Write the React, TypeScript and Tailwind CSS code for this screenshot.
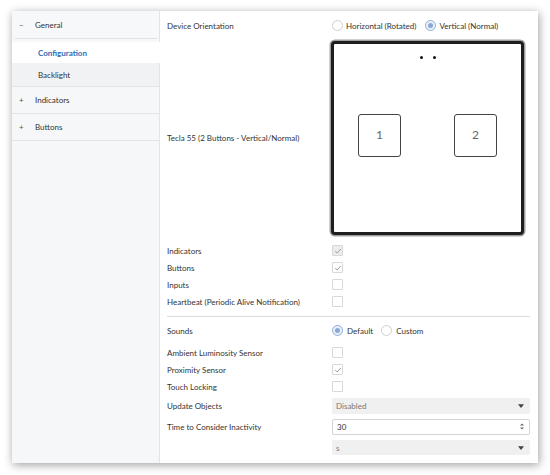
import React from 'react';

const Check = ({ className = '' }: { className?: string }) => (
  <svg viewBox="0 0 10 10" className={`w-[8px] h-[8px] ${className}`}>
    <path d="M1.5 5.2 L4 7.5 L8.5 2.5" fill="none" stroke="currentColor" strokeWidth="1.1" />
  </svg>
);

const Checkbox = ({ checked = false, filled = false }: { checked?: boolean; filled?: boolean }) => (
  <div
    className={`w-[11px] h-[11px] border border-[#d8d8d8] rounded-[1px] flex items-center justify-center ${
      filled ? 'bg-[#ececec]' : 'bg-white'
    }`}
  >
    {checked && <Check className="text-[#8a9a8a]" />}
  </div>
);

const Radio = ({ selected = false }: { selected?: boolean }) => (
  <div
    className={`w-[11px] h-[11px] rounded-full border flex items-center justify-center ${
      selected ? 'border-[#8fb0d8] bg-[#e8f0fa]' : 'border-[#cfcfcf] bg-white'
    }`}
  >
    {selected && <div className="w-[5px] h-[5px] rounded-full bg-[#8aa8d0]" />}
  </div>
);

const Caret = () => (
  <svg viewBox="0 0 8 5" className="w-[6px] h-[4px]">
    <path d="M0 0 L8 0 L4 5 Z" fill="#444" />
  </svg>
);

const Row = ({ label, h = 'h-[17px]', children }: { label: string; h?: string; children?: React.ReactNode }) => (
  <div className={`flex items-center ${h}`}>
    <div className="w-[165px] shrink-0">{label}</div>
    <div className="flex items-center flex-1">{children}</div>
  </div>
);

const SideItem = ({
  sign,
  label,
  className = '',
}: {
  sign?: string;
  label: string;
  className?: string;
}) => (
  <div className={`flex items-center ${className}`}>
    <span className="w-[23px] pl-[7px] text-[#555]">{sign}</span>
    <span>{label}</span>
  </div>
);

export default function App() {
  return (
    <div
      className="w-[550px] h-[475px] bg-white pt-[11px] pl-[12px] text-[8px] text-[#333]"
      style={{ fontFamily: 'Lato, "Open Sans", sans-serif' }}
    >
      <div className="w-[526px] h-[452px] flex bg-white shadow-[1px_2px_9px_rgba(0,0,0,0.38)]">
        {/* sidebar */}
        <div className="w-[148px] shrink-0 bg-[#f6f7f8] flex flex-col">
          <div className="h-[31px] bg-[#f7f8f9] border-r border-[#e2e4e6] flex flex-col">
            <SideItem sign="−" label="General" className="h-[27px]" />
            <div className="ml-[3px] mr-[2px] border-b border-[#e0e2e4]" />
          </div>
          <div className="h-[21px] bg-white flex items-center pl-[26px] font-bold text-[#2f6db5]">
            Configuration
          </div>
          <div className="h-[24px] bg-[#f1f2f3] border-r border-b border-[#e2e4e6] flex items-center pl-[26px]">
            Backlight
          </div>
          <SideItem sign="+" label="Indicators" className="h-[27px] border-r border-b border-[#e2e4e6]" />
          <SideItem sign="+" label="Buttons" className="h-[27px] border-r border-b border-[#e2e4e6]" />
          <div className="flex-1 border-r border-[#e2e4e6]" />
        </div>

        {/* content */}
        <div className="flex-1 flex flex-col pl-[7px] pr-[8px]">
          <Row label="Device Orientation" h="h-[29px]">
            <Radio />
            <span className="ml-[3px] mr-[9px]">Horizontal (Rotated)</span>
            <Radio selected />
            <span className="ml-[3px]">Vertical (Normal)</span>
          </Row>

          <Row label="Tecla 55 (2 Buttons - Vertical/Normal)" h="h-[195px]">
            <div className="-ml-[1px] w-[193px] h-[194px] rounded-[4px] border-[3px] border-[#1e1e1e] shadow-[0_0_0_1.5px_#a0a0a0] bg-white flex flex-col items-center">
              <div className="flex gap-[10px] mt-[12px]">
                <div className="w-[3px] h-[3px] rounded-full bg-[#111]" />
                <div className="w-[3px] h-[3px] rounded-full bg-[#111]" />
              </div>
              <div className="flex w-full justify-between px-[24px] mt-[55px]">
                <div className="w-[43px] h-[43px] border-[1.5px] border-[#444] rounded-[3px] flex items-center justify-center text-[12px] text-[#666]">
                  1
                </div>
                <div className="w-[43px] h-[43px] border-[1.5px] border-[#444] rounded-[3px] flex items-center justify-center text-[12px] text-[#666]">
                  2
                </div>
              </div>
            </div>
          </Row>

          <div className="h-[7px]" />
          <Row label="Indicators">
            <Checkbox checked filled />
          </Row>
          <Row label="Buttons">
            <Checkbox checked />
          </Row>
          <Row label="Inputs">
            <Checkbox />
          </Row>
          <Row label="Heartbeat (Periodic Alive Notification)">
            <Checkbox />
          </Row>

          <div className="h-[7px] border-b border-[#dcdcdc]" />

          <Row label="Sounds" h="h-[27px]">
            <Radio selected />
            <span className="ml-[4px] mr-[8px]">Default</span>
            <Radio />
            <span className="ml-[4px]">Custom</span>
          </Row>
          <Row label="Ambient Luminosity Sensor">
            <Checkbox />
          </Row>
          <Row label="Proximity Sensor">
            <Checkbox checked />
          </Row>
          <Row label="Touch Locking">
            <Checkbox />
          </Row>

          <Row label="Update Objects" h="h-[21px]">
            <div className="w-[198px] h-[16px] bg-[#f0f0f0] rounded-[2px] flex items-center justify-between pl-[4px] pr-[6px] text-[#777]">
              <span>Disabled</span>
              <Caret />
            </div>
          </Row>
          <Row label="Time to Consider Inactivity" h="h-[21px]">
            <div className="w-[198px] h-[16px] bg-white border border-[#d4d4d4] rounded-[2px] flex items-center justify-between pl-[4px] pr-[5px]">
              <span>30</span>
              <div className="flex flex-col gap-[1px]">
                <svg viewBox="0 0 6 3" className="w-[4px] h-[3px]">
                  <path d="M0 3 L6 3 L3 0 Z" fill="#666" />
                </svg>
                <svg viewBox="0 0 6 3" className="w-[4px] h-[3px]">
                  <path d="M0 0 L6 0 L3 3 Z" fill="#666" />
                </svg>
              </div>
            </div>
          </Row>
          <Row label="" h="h-[21px]">
            <div className="w-[198px] h-[15px] bg-[#f0f0f0] rounded-[2px] flex items-center justify-between pl-[4px] pr-[6px] text-[#777]">
              <span>s</span>
              <Caret />
            </div>
          </Row>
        </div>
      </div>
    </div>
  );
}
